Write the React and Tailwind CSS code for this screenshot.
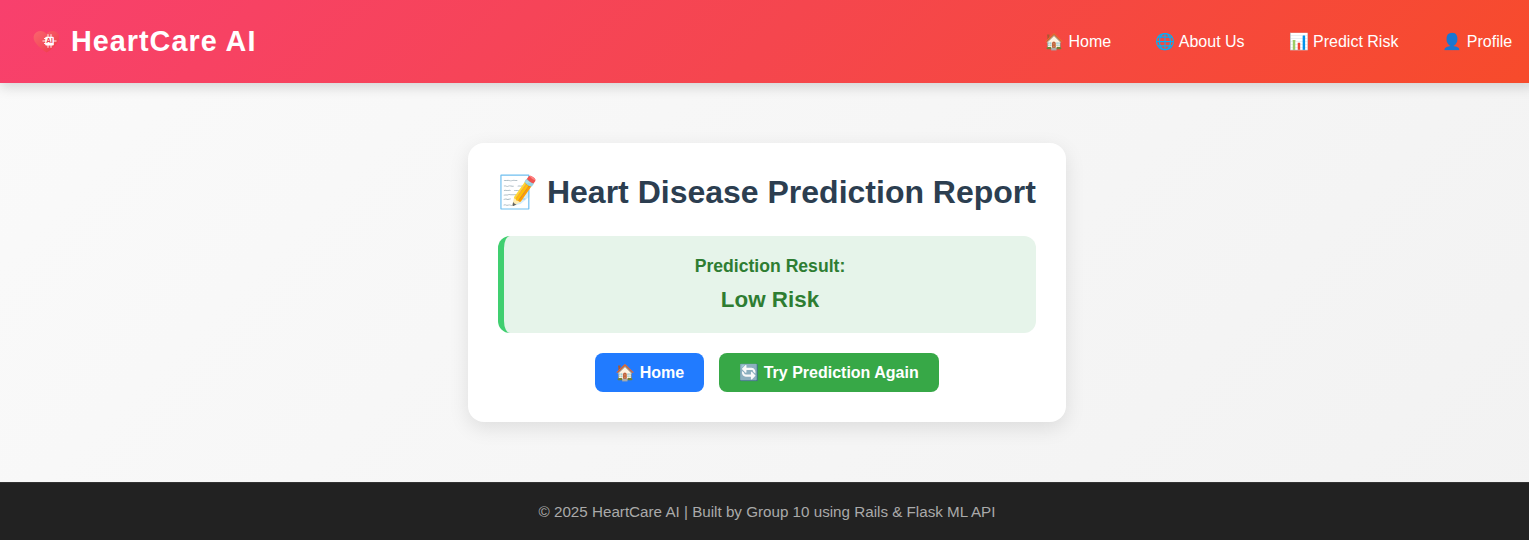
export default function App() {
  return (
    <div className="w-full overflow-hidden">
      <div className="flex h-[540px] w-[1534px] flex-col bg-linear-[135deg] from-[#fafafa] to-[#f2f2f2] font-['Liberation_Sans',sans-serif]">
        <header className="z-10 flex h-[83px] shrink-0 items-center justify-between bg-linear-[135deg] from-[#f8406d] via-[#f5464e] to-[#f74b2b] pr-[21.8px] pl-8 text-white shadow-[0_4px_12px_rgba(0,0,0,0.15)]">
          <a className="flex items-center gap-[10px] text-[28.8px] font-bold tracking-[1px]">
            <svg className="size-[29px]" viewBox="0 0 29 29">
              <defs>
                <linearGradient id="heart" x1="0" y1="0" x2="1" y2="1">
                  <stop offset="0" stopColor="#fa656d" />
                  <stop offset="0.5" stopColor="#f4505d" />
                  <stop offset="1" stopColor="#ef3445" />
                </linearGradient>
              </defs>
              <path d="M14.500 25.500C12 24 7 20 4.500 17C1.500 13.500 1 10.500 2.200 7.800C4.700 2.500 11.500 3 14.500 7C17.500 3 24.500 2.600 26.700 7.800C28 11 26.700 14 24.500 17C22 20 17 24.500 14.500 25.500Z" fill="url(#heart)" />
              <path d="M16 7.200v13.600M19 7.200v13.600M12 11.500h2M10.500 14h14M12 16.500h2" stroke="#fff" strokeWidth="0.900" />
              <rect x="13.200" y="9.800" width="8.600" height="8.600" rx="1.200" fill="#fff" />
              <text x="17.500" y="16.400" textAnchor="middle" fontSize="6.500" letterSpacing="0" fontWeight="bold" fill="#e83f50">AI</text>
            </svg>
            HeartCare AI
          </a>
          <nav className="flex gap-11 text-base">
            <a>🏠 Home</a>
            <a>🌐 About Us</a>
            <a>📊 Predict Risk</a>
            <a>👤 Profile</a>
          </nav>
        </header>
        <main className="flex h-[399px] shrink-0 items-center justify-center">
          <section className="flex h-[279px] w-[598px] flex-col items-center rounded-2xl bg-white p-[30px] text-center shadow-[0_6px_20px_rgba(0,0,0,0.1)]">
            <h1 className="h-[38px] text-[32px] leading-[38px] font-bold whitespace-nowrap text-[#2c3e50]">📝 Heart Disease Prediction Report</h1>
            <div className="mt-[25px] h-[97px] w-full shrink-0 rounded-xl border-l-[6px] border-[#40cf70] bg-[#e6f4ea] pt-5 font-bold text-[#2e7d32]">
              <h2 className="text-[17.6px] leading-5">Prediction Result:</h2>
              <p className="mt-[11px] text-[22.4px] leading-[26px]">Low Risk</p>
            </div>
            <div className="mt-5 flex gap-[15px] font-bold text-white">
              <button className="h-[39px] rounded-lg bg-[#217bff] px-5">🏠 Home</button>
              <button className="h-[39px] rounded-lg bg-[#37a847] px-5">🔄 Try Prediction Again</button>
            </div>
          </section>
        </main>
        <footer className="flex h-[58px] shrink-0 items-center justify-center border-t border-[#333] bg-[#222] pt-px text-[15.2px] text-[#aaa]">
          © 2025 HeartCare AI | Built by Group 10 using Rails &amp; Flask ML API
        </footer>
      </div>
    </div>
  );
}
